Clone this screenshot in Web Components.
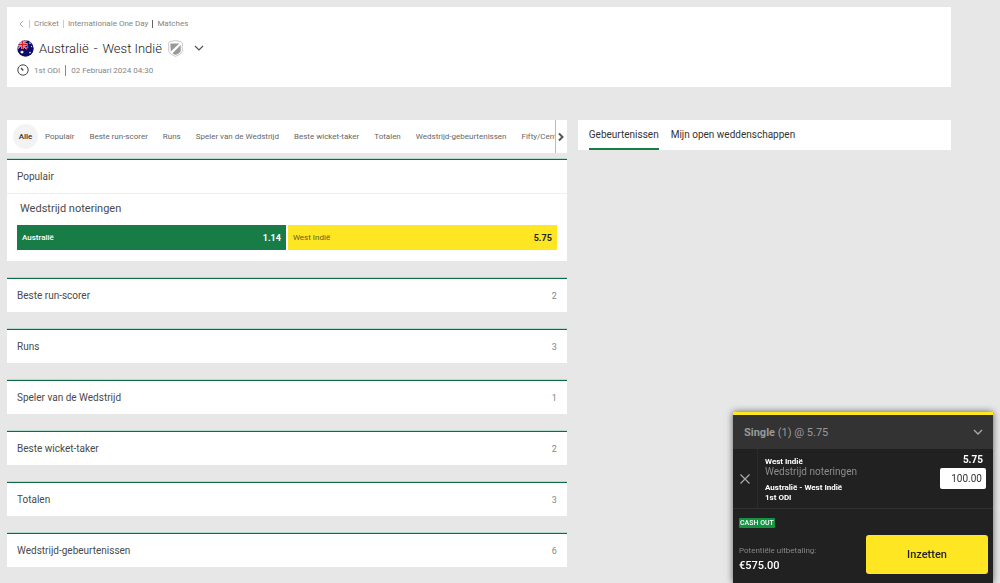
<!DOCTYPE html>
<html lang="nl">
<head>
<meta charset="utf-8">
<meta name="viewport" content="width=device-width, initial-scale=1">
<title>Australië - West Indië</title>
<style>
  :root {
    --green: #187c46;
    --line: #136a42;
    --yellow: #fee722;
    --text: #4a4a4a;
    --muted: #858585;
  }

  body {
    margin: 0;
    min-height: 100vh;
    background: #e7e7e7;
    color: var(--text);
    font-family: Roboto, "Liberation Sans", sans-serif;
    font-size: 10px;
  }

  main {
    padding: 7px 49px 14px 7px;
  }

  .columns {
    display: grid;
    grid-template-columns: minmax(0, 3fr) minmax(0, 2fr);
    gap: 11px;
    align-items: start;
    margin-top: 33px;
  }

  .markets {
    display: flex;
    flex-direction: column;
    gap: 17px;
    margin-top: 6px;
  }

  .odds {
    display: grid;
    grid-template-columns: 1fr 1fr;
    gap: 2px;
  }
</style>
</head>
<body>
<main>
  <match-header></match-header>
  <div class="columns">
    <section>
      <market-tabs></market-tabs>
      <div class="markets">
        <market-panel label="Populair" open>
          <span slot="title">Wedstrijd noteringen</span>
          <div class="odds">
            <odds-button class="home" name="Australië" price="1.14"></odds-button>
            <odds-button class="away" name="West Indië" price="5.75"></odds-button>
          </div>
        </market-panel>
        <market-panel label="Beste run-scorer" count="2"></market-panel>
        <market-panel label="Runs" count="3"></market-panel>
        <market-panel label="Speler van de Wedstrijd" count="1"></market-panel>
        <market-panel label="Beste wicket-taker" count="2"></market-panel>
        <market-panel label="Totalen" count="3"></market-panel>
        <market-panel label="Wedstrijd-gebeurtenissen" count="6"></market-panel>
      </div>
    </section>
    <side-tabs></side-tabs>
  </div>
</main>
<bet-slip>
  <bet-line name="West Indië" market="Wedstrijd noteringen" match="Australië - West Indië" event="1st ODI" price="5.75" stake="100.00"></bet-line>
</bet-slip>

<script>
const reset = /* css */`
  :host, * { box-sizing: border-box; }
  button, input { font: inherit; color: inherit; border: 0; margin: 0; padding: 0; background: none; }
  button { cursor: pointer; }
  a { color: inherit; text-decoration: none; }
  h1, h2, h3, p { margin: 0; font: inherit; }
  svg { display: block; flex: none; }
`;

class MatchHeader extends HTMLElement {
  constructor() {
    super();
    this.attachShadow({ mode: "open" });
  }

  static get styles() {
    return /* css */`
      ${reset}
      :host {
        display: block;
        height: 80px;
        padding: 10px;
        background: #fff;
      }

      nav, .title, .info {
        display: flex;
        align-items: center;
      }

      nav {
        height: 13px;
        gap: 4px;
        color: var(--muted);
        font-size: 8px;
      }

      i {
        width: 1px;
        height: 8px;
        background: #ccc;
      }

      i.dark { background: #666; }

      .title {
        height: 20px;
        margin-top: 8px;
        gap: 5px;
      }

      h1 {
        display: flex;
        gap: 5px;
        color: #222;
        font-size: 13px;
        font-weight: 300;
      }

      .title button { margin-left: 5px; }

      .info {
        height: 12px;
        margin-top: 6px;
        gap: 5px;
        color: var(--muted);
        font-size: 8px;
      }

      .info i { height: 11px; background: #888; }
    `;
  }

  connectedCallback() {
    this.shadowRoot.innerHTML = /* html */`
    <style>${MatchHeader.styles}</style>
    <nav>
      <a href="#" aria-label="Terug"><svg width="8" height="8" viewBox="0 0 8 8" fill="none" stroke="#aaa"><path d="M6 1 3 4l3 3"/></svg></a>
      <i></i><a href="#">Cricket</a>
      <i></i><a href="#">Internationale One Day</a>
      <i class="dark"></i><a href="#">Matches</a>
    </nav>
    <div class="title">
      <svg width="17" height="17" viewBox="0 0 17 17">
        <defs><clipPath id="round"><circle cx="8.5" cy="8.5" r="8.2"/></clipPath></defs>
        <g clip-path="url(#round)">
          <path fill="#0b0b68" d="M0 0h17v17H0z"/>
          <path stroke="#eee" stroke-width="1.6" d="m0 0 10 9M10 0 0 9"/>
          <path stroke="#d3222f" stroke-width=".8" d="m0 0 10 9M10 0 0 9"/>
          <path stroke="#eee" stroke-width="2.4" d="M5.5 0v9M0 4.5h10.5"/>
          <path stroke="#d3222f" stroke-width="1.5" d="M5.5 0v9M0 4.5h10.5"/>
          <path fill="#fff" d="m5 10 .5 1.2 1.3-.2-.8 1 .8 1-1.3-.1L5 14.2l-.5-1.3-1.3.1.8-1-.8-1 1.3.2zM13 2l.4.8.8.2-.8.4-.4.8-.4-.8-.8-.4.8-.2zM10.8 6l.3.7.7.3-.7.3-.3.7-.3-.7-.7-.3.7-.3zM14.6 5.5l.3.7.7.3-.7.3-.3.7-.3-.7-.7-.3.7-.3zM13 11.5l.4.8.8.3-.8.3-.4.8-.4-.8-.8-.3.8-.3z"/>
        </g>
      </svg>
      <h1><span>Australië</span><span>-</span><span>West Indië</span></h1>
      <svg width="17" height="17" viewBox="0 0 17 17">
        <path fill="#fff" stroke="#bbb" stroke-width=".8" d="M3 1.500 8.500.6l5.500.9 1.700 2.300-.6 3 .4 4L13.400 14l-4.900 2.400L3.600 14l-2.100-3.200.4-4-.6-3z"/>
        <path fill="#999" d="M3.300 3.400h9L3.800 11.500zM13.700 5v6.200L12 13.300 8.500 15l-3-1.700z"/>
      </svg>
      <button aria-label="Meer wedstrijden"><svg width="10" height="10" viewBox="0 0 10 10" fill="none" stroke="#555" stroke-width="1.2"><path d="m1 3 4 4 4-4"/></svg></button>
    </div>
    <div class="info">
      <svg width="12" height="12" viewBox="0 0 12 12" fill="none" stroke="#444"><circle cx="6" cy="6" r="5.2"/><path d="M4 4l2.300 2.500" stroke-width="1.3"/></svg>
      <span>1st ODI</span><i></i><span>02 Februari 2024 04:30</span>
    </div>`;
  }
}

class MarketTabs extends HTMLElement {
  constructor() {
    super();
    this.attachShadow({ mode: "open" });
  }

  static get styles() {
    return /* css */`
      ${reset}
      :host {
        display: flex;
        height: 33px;
        background: #fff;
        color: #666;
        font-size: 8px;
      }

      .list {
        display: flex;
        flex: 1;
        align-items: center;
        min-width: 0;
        gap: 15px;
        padding-left: 6px;
        overflow: hidden;
      }

      .list button {
        flex: none;
        white-space: nowrap;
      }

      .list .active {
        width: 25px;
        height: 25px;
        margin-right: -8px;
        border-radius: 50%;
        background: #f3f3f3;
        color: #333;
        font-weight: 500;
      }

      .next {
        display: grid;
        place-items: center;
        width: 12px;
        border-left: 1px solid #bbb;
      }
    `;
  }

  connectedCallback() {
    const tabs = ["Alle", "Populair", "Beste run-scorer", "Runs", "Speler van de Wedstrijd", "Beste wicket-taker", "Totalen", "Wedstrijd-gebeurtenissen", "Fifty/Century"];
    this.shadowRoot.innerHTML = /* html */`
    <style>${MarketTabs.styles}</style>
    <div class="list">
      ${tabs.map((tab, i) => `<button class="${i ? "" : "active"}">${tab}</button>`).join("")}
    </div>
    <button class="next" aria-label="Volgende"><svg width="8" height="10" viewBox="0 0 8 10" fill="none" stroke="#555" stroke-width="2"><path d="m2 1.500 3.500 3.500L2 8.500"/></svg></button>`;
  }
}

class MarketPanel extends HTMLElement {
  constructor() {
    super();
    this.attachShadow({ mode: "open" });
  }

  static get styles() {
    return /* css */`
      ${reset}
      :host {
        display: block;
        border-top: 1px solid var(--line);
        background: #fff;
        box-shadow: 0 -1px #b5dccb;
      }

      .head {
        display: flex;
        align-items: center;
        justify-content: space-between;
        width: 100%;
        height: 33px;
        padding: 0 10px;
        font-size: 10px;
      }

      .count {
        color: var(--muted);
        font-size: 9px;
      }

      :host([open]) .head {
        height: 34px;
        border-bottom: 1px solid #eee;
      }

      .body { padding: 8px 10px 11px; }

      h3 {
        padding: 0 3px;
        margin-bottom: 9px;
        font-size: 11px;
        line-height: 14px;
      }
    `;
  }

  connectedCallback() {
    const open = this.hasAttribute("open");
    this.shadowRoot.innerHTML = /* html */`
    <style>${MarketPanel.styles}</style>
    <button class="head" aria-expanded="${open}">
      <span>${this.getAttribute("label")}</span>
      <span class="count">${this.getAttribute("count") || ""}</span>
    </button>
    ${open ? `<div class="body"><h3><slot name="title"></slot></h3><slot></slot></div>` : ""}`;
  }
}

class OddsButton extends HTMLElement {
  constructor() {
    super();
    this.attachShadow({ mode: "open" });
  }

  static get styles() {
    return /* css */`
      ${reset}
      :host { display: block; }

      button {
        display: flex;
        align-items: center;
        justify-content: space-between;
        width: 100%;
        height: 25px;
        padding: 0 5px;
        background: var(--green);
        color: #fff;
        font-size: 8px;
        font-weight: 500;
      }

      b { font-size: 9px; }

      :host(.away) button {
        background: var(--yellow);
        color: #665d18;
        font-weight: 400;
      }

      :host(.away) b { color: #222; }
    `;
  }

  connectedCallback() {
    this.shadowRoot.innerHTML = /* html */`
    <style>${OddsButton.styles}</style>
    <button><span>${this.getAttribute("name")}</span><b>${this.getAttribute("price")}</b></button>`;
  }
}

class SideTabs extends HTMLElement {
  constructor() {
    super();
    this.attachShadow({ mode: "open" });
  }

  static get styles() {
    return /* css */`
      ${reset}
      :host {
        display: flex;
        gap: 12px;
        height: 30px;
        padding: 0 11px;
        background: #fff;
        color: #333;
        font-size: 10px;
      }

      button { border-bottom: 2px solid transparent; }
      .active { border-color: var(--green); }
    `;
  }

  connectedCallback() {
    this.shadowRoot.innerHTML = /* html */`
    <style>${SideTabs.styles}</style>
    <button class="active">Gebeurtenissen</button>
    <button>Mijn open weddenschappen</button>`;
  }
}

class BetLine extends HTMLElement {
  constructor() {
    super();
    this.attachShadow({ mode: "open" });
  }

  static get styles() {
    return /* css */`
      ${reset}
      :host {
        display: flex;
        height: 60px;
        border-bottom: 1px solid #303030;
        color: #fff;
        font-size: 8px;
      }

      .remove {
        display: grid;
        place-items: center;
        width: 25px;
        border-right: 1px solid #2b2b2b;
      }

      .pick {
        flex: 1;
        padding: 8px 7px 0;
        line-height: 10px;
        font-weight: 700;
      }

      .market {
        margin-bottom: 6px;
        color: #8c8c8c;
        font-size: 10px;
        font-weight: 400;
      }

      .stake {
        display: flex;
        flex-direction: column;
        align-items: flex-end;
        gap: 2px;
        padding: 5px 7px 0 0;
      }

      .stake b {
        padding-right: 3px;
        font-size: 10px;
        line-height: 12px;
      }

      input {
        width: 46px;
        height: 21px;
        padding: 0 4px;
        border-radius: 2px;
        background: #fff;
        color: #333;
        font-size: 10px;
        text-align: right;
      }
    `;
  }

  connectedCallback() {
    const get = (name) => this.getAttribute(name);
    this.shadowRoot.innerHTML = /* html */`
    <style>${BetLine.styles}</style>
    <button class="remove" aria-label="Verwijderen"><svg width="10" height="10" viewBox="0 0 10 10" stroke="#aaa" stroke-width="1.2"><path d="m.5.5 9 9M9.5.5l-9 9"/></svg></button>
    <div class="pick">
      <p>${get("name")}</p>
      <p class="market">${get("market")}</p>
      <p>${get("match")}</p>
      <p>${get("event")}</p>
    </div>
    <div class="stake">
      <b>${get("price")}</b>
      <input type="text" inputmode="decimal" aria-label="Inzet" value="${get("stake")}">
    </div>`;
  }
}

class BetSlip extends HTMLElement {
  constructor() {
    super();
    this.attachShadow({ mode: "open" });
  }

  static get styles() {
    return /* css */`
      ${reset}
      :host {
        position: fixed;
        right: 7px;
        bottom: 0;
        display: block;
        width: 260px;
        border-top: 3px solid var(--yellow);
        background: #212121;
        box-shadow: 0 0 7px rgba(0, 0, 0, .6);
      }

      .head {
        display: flex;
        align-items: center;
        justify-content: space-between;
        width: 100%;
        height: 34px;
        padding: 0 10px 0 11px;
        background: #333;
        color: #999;
        font-size: 11px;
      }

      .foot {
        display: flex;
        justify-content: space-between;
        padding: 9px 5px 9px 6px;
      }

      .cash {
        width: fit-content;
        padding: 0 1px;
        border-radius: 1px;
        background: #169243;
        color: #fff;
        font-size: 7px;
        font-weight: 500;
        line-height: 10px;
      }

      .label {
        margin-top: 16px;
        color: #858585;
        font-size: 8px;
        line-height: 14px;
      }

      .payout {
        color: #fff;
        font-size: 11px;
        font-weight: 500;
        line-height: 16px;
      }

      .place {
        align-self: flex-end;
        width: 122px;
        height: 39px;
        border-radius: 3px;
        background: var(--yellow);
        color: #222;
        font-size: 11px;
        font-weight: 500;
      }
    `;
  }

  connectedCallback() {
    this.shadowRoot.innerHTML = /* html */`
    <style>${BetSlip.styles}</style>
    <button class="head">
      <span><b>Single</b> (1) @ 5.75</span>
      <svg width="10" height="10" viewBox="0 0 10 10" fill="none" stroke="#aaa" stroke-width="1.3"><path d="m1 3 4 4 4-4"/></svg>
    </button>
    <slot></slot>
    <div class="foot">
      <div>
        <p class="cash">CASH OUT</p>
        <p class="label">Potentiële uitbetaling:</p>
        <p class="payout">€575.00</p>
      </div>
      <button class="place">Inzetten</button>
    </div>`;
  }
}

customElements.define("match-header", MatchHeader);
customElements.define("market-tabs", MarketTabs);
customElements.define("market-panel", MarketPanel);
customElements.define("odds-button", OddsButton);
customElements.define("side-tabs", SideTabs);
customElements.define("bet-line", BetLine);
customElements.define("bet-slip", BetSlip);
</script>
</body>
</html>
